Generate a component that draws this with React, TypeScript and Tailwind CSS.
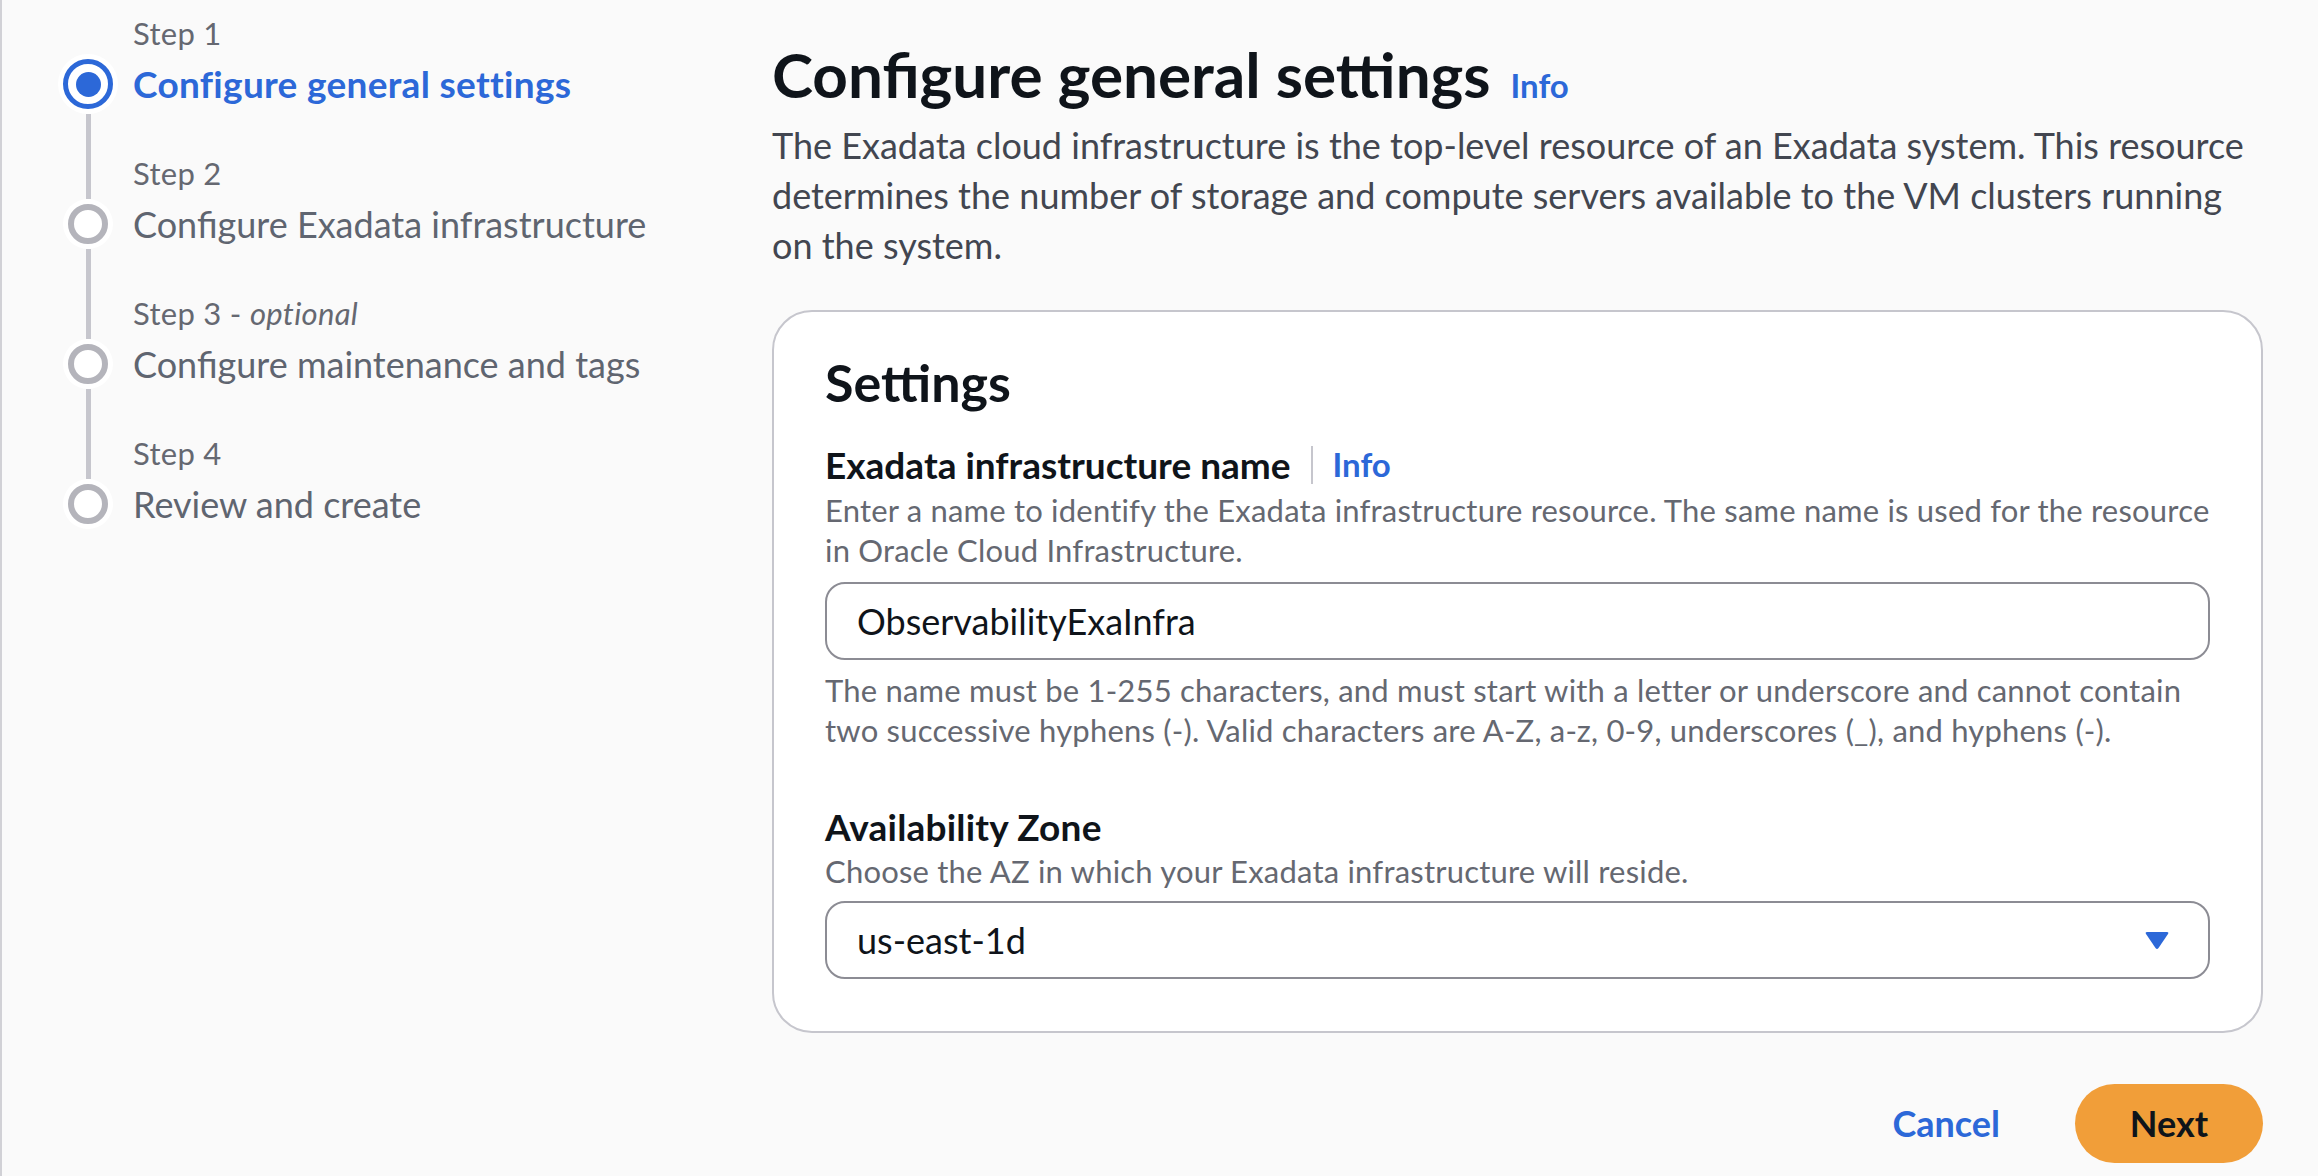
import React from 'react';

const steps = [
  { label: 'Step 1', title: 'Configure general settings', active: true },
  { label: 'Step 2', title: 'Configure Exadata infrastructure' },
  { label: 'Step 3', optional: true, title: 'Configure maintenance and tags' },
  { label: 'Step 4', title: 'Review and create' },
];

function StepCircle({ active }: { active?: boolean }) {
  if (active) {
    return (
      <div className="my-[5px] w-[50px] h-[50px] rounded-full border-[5px] border-[#2c68d8] bg-white ring-[5px] ring-white flex items-center justify-center shrink-0">
        <div className="w-[25px] h-[25px] rounded-full bg-[#2c68d8]" />
      </div>
    );
  }
  return <div className="my-[5px] w-[40px] h-[40px] rounded-full border-[6px] border-[#b4b4bb] bg-white ring-[5px] ring-white shrink-0" />;
}

function WizardNav() {
  return (
    <nav className="w-[770px] shrink-0 pt-[13px] pl-[56px]">
      {steps.map((s, i) => {
        const first = i === 0;
        const last = i === steps.length - 1;
        return (
          <div key={i} className="flex">
            {/* rail */}
            <div className="w-[60px] flex flex-col items-center">
              <div className={`w-[5px] h-[40px] ${first ? '' : 'bg-[#c6c6cd]'}`} />
              <div className="h-[62px] flex flex-col items-center">
                <div className={`w-[5px] flex-1 ${first ? '' : 'bg-[#c6c6cd]'}`} />
                <StepCircle active={s.active} />
                <div className={`w-[5px] flex-1 ${last ? '' : 'bg-[#c6c6cd]'}`} />
              </div>
              <div className={`w-[5px] h-[38px] ${last ? '' : 'bg-[#c6c6cd]'}`} />
            </div>
            <div className="pl-[15px]">
              <p className="text-[31px] tracking-[0.3px] leading-[40px] text-[#656871]">
                {s.label}
                {s.optional && <> - <i>optional</i></>}
              </p>
              <p className={`leading-[62px] ${s.active ? 'text-[37px] tracking-[0.3px] font-bold text-[#2c68d8]' : 'text-[36px] text-[#5f6570]'}`}>{s.title}</p>
            </div>
          </div>
        );
      })}
    </nav>
  );
}

export default function App() {
  return (
    <div className="min-h-screen flex bg-[#fafafa] border-l-2 border-[#d1d1d6] font-[Lato,sans-serif] antialiased">
      <WizardNav />

      <main className="flex-1 pt-[36px] pr-[55px]">
        {/* Page header */}
        <div className="flex items-baseline gap-[20px]">
          <h1 className="text-[62px] leading-[76px] font-bold text-[#0f141a]">Configure general settings</h1>
          <a className="text-[33px] font-bold text-[#2c68d8]">Info</a>
        </div>
        <p className="mt-[8px] text-[36px] leading-[50px] text-[#424650]">
          The Exadata cloud infrastructure is the top-level resource of an Exadata system. This resource determines the number of storage and compute servers available to the VM clusters running on the system.
        </p>

        {/* Settings container */}
        <section className="mt-[40px] bg-white border-2 border-[#c6c6cd] rounded-[40px] px-[51px] pt-[40px] pb-[52px]">
          <h2 className="text-[52px] leading-[60px] font-bold text-[#0f141a]">Settings</h2>

          <div className="mt-[28px]">
            <div className="flex items-center">
              <label className="text-[37px] leading-[48px] font-bold text-[#0f141a]">Exadata infrastructure name</label>
              <span className="mx-[20px] w-[2px] h-[38px] bg-[#c6c6cd]" />
              <a className="text-[33px] font-bold text-[#2c68d8]">Info</a>
            </div>
            <p className="text-[31px] tracking-[0.2px] leading-[40px] text-[#656871]">
              Enter a name to identify the Exadata infrastructure resource. The same name is used for the resource in Oracle Cloud Infrastructure.
            </p>
            <div className="mt-[12px] h-[78px] rounded-[20px] border-2 border-[#8c8c94] flex items-center pl-[30px] text-[36px] text-[#0f141a]">
              ObservabilityExaInfra
            </div>
            <p className="mt-[10px] text-[31px] tracking-[0.2px] leading-[40px] text-[#656871]">
              The name must be 1-255 characters, and must start with a letter or underscore and cannot contain two successive hyphens (-). Valid characters are A-Z, a-z, 0-9, underscores (_), and hyphens (-).
            </p>
          </div>

          <div className="mt-[53px]">
            <label className="block text-[37px] tracking-[0.2px] leading-[48px] font-bold text-[#0f141a]">Availability Zone</label>
            <p className="text-[31px] tracking-[0.2px] leading-[40px] text-[#656871]">Choose the AZ in which your Exadata infrastructure will reside.</p>
            <div className="mt-[10px] h-[78px] rounded-[20px] border-2 border-[#8c8c94] flex items-center justify-between pl-[30px] pr-[38px] text-[36px] text-[#0f141a]">
              <span>us-east-1d</span>
              <svg width="26" height="20" viewBox="0 0 26 20">
                <path d="M3 2 H23 Q25 2 24 4 L14.5 18 Q13 20 11.5 18 L2 4 Q1 2 3 2 Z" fill="#2c68d8" />
              </svg>
            </div>
          </div>
        </section>

        {/* Actions */}
        <div className="mt-[51px] flex justify-end items-center gap-[30px]">
          <button className="px-[45px] h-[79px] text-[36px] font-bold text-[#2c68d8]">Cancel</button>
          <button className="w-[188px] h-[79px] rounded-full bg-[#f19e39] text-[36px] font-bold text-[#0f141a]">Next</button>
        </div>
      </main>
    </div>
  );
}
